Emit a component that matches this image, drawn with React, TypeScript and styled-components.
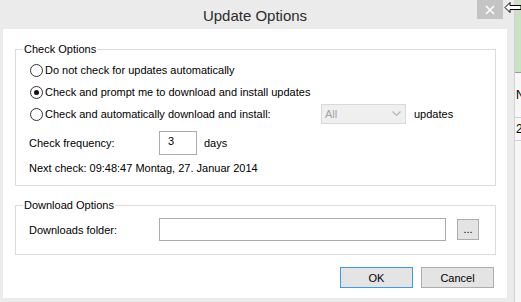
import React, { useState } from 'react';
import styled, { createGlobalStyle } from 'styled-components';

const GlobalStyle = createGlobalStyle`
  html, body {
    margin: 0;
    padding: 0;
    background: #ffffff;
    overflow: hidden;
  }
  body {
    font-family: "Liberation Sans", Arial, sans-serif;
    font-size: 11px;
    color: #000;
  }
`;

const Screen = styled.div`
  display: flex;
  width: 521px;
  height: 302px;
  position: relative;
`;

const Window = styled.div`
  width: 514px;
  height: 302px;
  background: #ebebeb;
  display: flex;
  flex-direction: column;
  flex-shrink: 0;
  position: relative;
`;

const TitleBar = styled.div`
  height: 29px;
  display: flex;
  align-items: center;
  justify-content: center;
  position: relative;
`;

const Title = styled.div`
  font-size: 15px;
  color: #2b2b2b;
  margin-top: 1px;
  margin-right: 4px;
`;

const CloseButton = styled.div`
  position: absolute;
  top: 0;
  right: 11px;
  width: 26px;
  height: 19px;
  background: #c4c4c4;
  display: flex;
  align-items: center;
  justify-content: center;
`;

const Client = styled.div`
  flex: 1;
  margin: 0 7px 4px 3px;
  background: #ffffff;
  padding: 13px 11px 0 12px;
  display: flex;
  flex-direction: column;
`;

const Group = styled.fieldset<{ $pb: number; $mt?: number }>`
  margin: ${p => p.$mt ?? 0}px 0 0 0;
  padding: 0 0 ${p => p.$pb}px 13px;
  border: 1px solid #dcdcdc;
  min-inline-size: 0;
`;

const Legend = styled.legend`
  margin-left: -6px;
  padding: 0 1px;
  line-height: 14px;
  font-size: 11px;
`;

const Rows = styled.div<{ $pt: number }>`
  display: flex;
  flex-direction: column;
  padding-top: ${p => p.$pt}px;
`;

const RadioRow = styled.label`
  display: flex;
  align-items: center;
  height: 22px;
  padding-left: 1px;
`;

const RadioCircle = styled.span<{ $checked: boolean }>`
  width: 11px;
  height: 11px;
  border-radius: 50%;
  border: 1px solid #333;
  background: #fff;
  margin-right: 2px;
  display: flex;
  align-items: center;
  justify-content: center;
  flex-shrink: 0;
  &::after {
    content: '';
    width: 5px;
    height: 5px;
    border-radius: 50%;
    background: ${p => (p.$checked ? '#111' : 'transparent')};
  }
`;

const RadioText = styled.span<{ $w?: number }>`
  width: ${p => (p.$w ? `${p.$w}px` : 'auto')};
  white-space: nowrap;
  flex-shrink: 0;
`;

const Select = styled.div`
  width: 76px;
  height: 18px;
  border: 1px solid #d9d9d9;
  background: #efefef;
  color: #a3a3a3;
  display: flex;
  align-items: center;
  justify-content: space-between;
  padding: 0 4px 0 3px;
  box-sizing: content-box;
  margin-right: 8px;
  flex-shrink: 0;
`;

const FieldRow = styled.div<{ $mt: number; $h: number }>`
  display: flex;
  align-items: center;
  height: ${p => p.$h}px;
  margin-top: ${p => p.$mt}px;
`;

const FieldLabel = styled.span`
  width: 130px;
  flex-shrink: 0;
`;

const TextBox = styled.div<{ $w: number; $h: number }>`
  width: ${p => p.$w}px;
  height: ${p => p.$h}px;
  box-sizing: border-box;
  border: 1px solid #ababab;
  background: #fff;
  padding: 3px 0 0 8px;
  flex-shrink: 0;
`;

const Suffix = styled.span`
  margin-left: 7px;
`;

const Button = styled.button<{ $default?: boolean; $w: number }>`
  width: ${p => p.$w}px;
  height: 21px;
  box-sizing: border-box;
  border: 1px solid ${p => (p.$default ? '#3c9ae8' : '#adadad')};
  background: #e4e4e4;
  font-family: inherit;
  font-size: 11px;
  color: #000;
  padding: 0;
  display: flex;
  align-items: center;
  justify-content: center;
`;

const BrowseButton = styled(Button)`
  margin-left: 11px;
  line-height: 10px;
  align-items: flex-end;
  padding-bottom: 5px;
`;

const ButtonBar = styled.div`
  display: flex;
  justify-content: flex-end;
  gap: 8px;
  margin-top: 12px;
  padding-right: 2px;
`;

const BehindApp = styled.div`
  flex: 1;
  border-left: 1px solid #d2d2d2;
  display: flex;
  flex-direction: column;
  background: #f7f7f7;
  overflow: hidden;
  font-size: 12px;
`;

const BehindHeader = styled.div`
  height: 72px;
  background: #c8e2c3;
  border-bottom: 1px solid #9a9a9a;
`;

const BehindCell = styled.div<{ $h: number }>`
  height: ${p => p.$h}px;
  display: flex;
  align-items: center;
  white-space: nowrap;
  border-bottom: 1px solid #cfcfcf;
  padding-left: 1px;
`;

const Cursor = styled.svg`
  position: absolute;
  left: 504px;
  top: 1px;
`;

export default function App() {
  const [choice, setChoice] = useState(1);
  const options = [
    'Do not check for updates automatically',
    'Check and prompt me to download and install updates',
  ];

  return (
    <>
      <GlobalStyle />
      <Screen>
        <Window>
          <TitleBar>
            <Title>Update Options</Title>
            <CloseButton>
              <svg width="10" height="10" viewBox="0 0 10 10">
                <path d="M1 1 L9 9 M9 1 L1 9" stroke="#fff" strokeWidth="1.6" />
              </svg>
            </CloseButton>
          </TitleBar>
          <Client>
            <Group $pb={9}>
              <Legend>Check Options</Legend>
              <Rows $pt={3}>
                {options.map((text, i) => (
                  <RadioRow key={text} onClick={() => setChoice(i)}>
                    <RadioCircle $checked={choice === i} />
                    <RadioText>{text}</RadioText>
                  </RadioRow>
                ))}
                <RadioRow onClick={() => setChoice(2)}>
                  <RadioCircle $checked={choice === 2} />
                  <RadioText $w={276}>Check and automatically download and install:</RadioText>
                  <Select>
                    <span>All</span>
                    <svg width="9" height="6" viewBox="0 0 9 6">
                      <path d="M0.5 0.5 L4.5 4.5 L8.5 0.5" stroke="#b5b5b5" strokeWidth="1.2" fill="none" />
                    </svg>
                  </Select>
                  <span>updates</span>
                </RadioRow>
                <FieldRow $mt={6} $h={24}>
                  <FieldLabel>Check frequency:</FieldLabel>
                  <TextBox $w={38} $h={24}>3</TextBox>
                  <Suffix>days</Suffix>
                </FieldRow>
                <FieldRow $mt={5} $h={16}>
                  Next check: 09:48:47 Montag, 27. Januar 2014
                </FieldRow>
              </Rows>
            </Group>
            <Group $pb={13} $mt={12}>
              <Legend>Download Options</Legend>
              <Rows $pt={6}>
                <FieldRow $mt={0} $h={23}>
                  <FieldLabel>Downloads folder:</FieldLabel>
                  <TextBox $w={287} $h={23} />
                  <BrowseButton $w={22}>...</BrowseButton>
                </FieldRow>
              </Rows>
            </Group>
            <ButtonBar>
              <Button $default $w={73}>OK</Button>
              <Button $w={73}>Cancel</Button>
            </ButtonBar>
          </Client>
        </Window>
        <BehindApp>
          <BehindHeader />
          <BehindCell $h={44}>N</BehindCell>
          <BehindCell $h={22}>2</BehindCell>
        </BehindApp>
        <Cursor width="17" height="13" viewBox="0 0 17 13">
          <path d="M1 6.5 L6 1.5 L6 4.5 L17 4.5 L17 8.5 L6 8.5 L6 11.5 Z" fill="#fff" stroke="#000" strokeWidth="1" />
        </Cursor>
      </Screen>
    </>
  );
}
